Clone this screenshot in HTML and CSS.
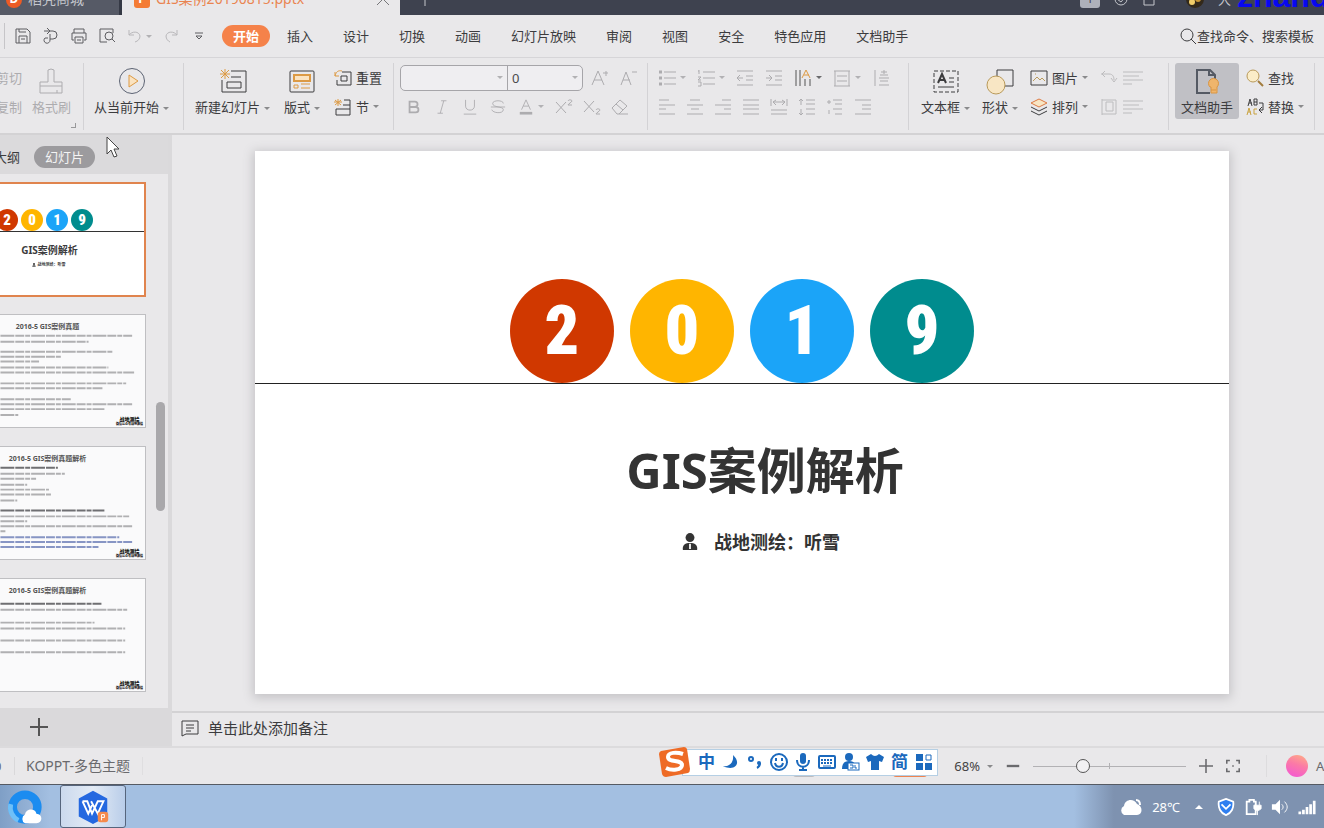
FILE: index.html
```html
<!DOCTYPE html>
<html lang="zh-CN">
<head>
<meta charset="utf-8">
<title>GIS案例20190815.pptx</title>
<link rel="stylesheet" href="styles.css">
</head>
<body>
<svg class="sprite" aria-hidden="true">
  <symbol id="i-save" viewBox="0 0 18 18"><path d="M2 2h11l3 3v11H2zM5 16V9h8v7M5 2v3h7M7 12h4"/></symbol>
  <symbol id="i-export" viewBox="0 0 18 18"><path d="M2 4h9a4 4 0 0 1 0 8H8M5 1l3 3-3 3M8 7v6a3 3 0 1 1-5-2h3"/></symbol>
  <symbol id="i-print" viewBox="0 0 18 18"><path d="M4 6V2h10v4M4 13H2V6h14v7h-2M5 10h8v6H5zM7 13h4"/></symbol>
  <symbol id="i-preview" viewBox="0 0 18 18"><path d="M9 15H2V2h13v4"/><circle cx="11" cy="9" r="4"/><path d="M14 12l3 3"/></symbol>
  <symbol id="i-undo" viewBox="0 0 18 18"><path d="M3 3v5h5M3 8c3-4 10-4 11 1 0 3-2 5-5 6"/></symbol>
  <symbol id="i-redo" viewBox="0 0 18 18"><path d="M15 3v5h-5M15 8C12 4 5 4 4 9c0 3 2 5 4 6"/></symbol>
  <symbol id="i-more" viewBox="0 0 18 18"><path d="M5 6h8M6 9l3 3 3-3z"/></symbol>
  <symbol id="i-search" viewBox="0 0 18 18"><circle cx="8" cy="8" r="6"/><path d="M12 12l5 5"/></symbol>
  <symbol id="i-brush" viewBox="0 0 28 28"><path d="M3 26V15h8V3q3-2 6 0v12h8v11zM3 19h22M20 26v-3"/></symbol>
  <symbol id="i-play" viewBox="0 0 28 28"><circle cx="14" cy="14" r="12.5" stroke="#5c6373"/><path d="M11 8l9 6-9 6z" fill="#fbe3c0" stroke="#dc9a44"/></symbol>
  <symbol id="i-newslide" viewBox="0 0 28 28"><path d="M12 4h15v21H3V13M12 10h10M8 15h14v6H8z"/><path d="M6 2v10M1 7h10M2 3l8 8M10 3l-8 8" stroke="#dc9a44"/></symbol>
  <symbol id="i-layout" viewBox="0 0 28 28"><rect x="2" y="4" width="24" height="21" rx="1"/><path d="M6 8h16v6H6z" fill="#fbe3c0" stroke="#dc9a44" stroke-width="2"/><path d="M6 18h4v3H6zM13 17h9M13 21h9" stroke="#dc9a44"/></symbol>
  <symbol id="i-reset" viewBox="0 0 18 18"><path d="M8 3h9v13H3v-5M7 7h6v5H7z"/><path d="M1 7c1-4 3-6 7-5M1 3v4h4" stroke="#dc9a44"/></symbol>
  <symbol id="i-section" viewBox="0 0 18 18"><path d="M10 2h6v5H9M2 11h14v6H2zM16 7v4"/><path d="M4 1v7M0 4h8M1 2l6 5M7 2L1 7" stroke="#dc9a44"/></symbol>
  <symbol id="i-aup" viewBox="0 0 18 18"><path d="M1 16L7 2l6 14M3 11h8M12 4h5M15 2v5"/></symbol>
  <symbol id="i-adown" viewBox="0 0 18 18"><path d="M2 16L7 3l5 13M4 11h7M13 3h5"/></symbol>
  <symbol id="i-bold" viewBox="0 0 18 18"><path d="M4 3h6a3 3 0 0 1 0 6H4zM4 9h7a3 3 0 0 1 0 6H4z" stroke-width="2"/></symbol>
  <symbol id="i-italic" viewBox="0 0 18 18"><path d="M8 2h6M4 16h6M11 2L7 16"/></symbol>
  <symbol id="i-under" viewBox="0 0 18 18"><path d="M4 1v7c0 6 10 6 10 0V1M2 17h14"/></symbol>
  <symbol id="i-strike" viewBox="0 0 18 18"><path d="M15 5c0-4-12-4-12 0 0 5 12 3 12 7 0 5-12 4-13 0M1 9h16"/></symbol>
  <symbol id="i-color" viewBox="0 0 18 18"><path d="M4 12L9 1l5 11M6 8h6"/><path d="M2 16h14" stroke-width="3"/></symbol>
  <symbol id="i-sup" viewBox="0 0 18 18"><path d="M1 4l10 11M11 4L1 15M13 3c1-2 4-1 4 0s-4 3-4 4h4"/></symbol>
  <symbol id="i-sub" viewBox="0 0 18 18"><path d="M1 3l10 11M11 3L1 14M13 12c1-2 4-1 4 0s-4 3-4 4h4"/></symbol>
  <symbol id="i-erase" viewBox="0 0 18 18"><path d="M1 10l8-8 7 6-8 8H6zM5 6l7 6M8 16h9"/></symbol>
  <symbol id="i-bullets" viewBox="0 0 18 18"><path d="M6 3h12M6 9h12M6 15h12"/><path d="M1 3h3M1 9h3M1 15h3" stroke-width="3"/></symbol>
  <symbol id="i-numbers" viewBox="0 0 18 18"><path d="M6 3h12M6 9h12M6 15h12M2 1v4M1 2h1M1 8h3l-3 3h3M1 13h3v4H1"/></symbol>
  <symbol id="i-outdent" viewBox="0 0 18 18"><path d="M1 2h16M10 7h7M10 11h7M1 16h16M1 9h6M4 6L1 9l3 3"/></symbol>
  <symbol id="i-indent" viewBox="0 0 18 18"><path d="M1 2h16M10 7h7M10 11h7M1 16h16M1 9h6M4 6l3 3-3 3"/></symbol>
  <symbol id="i-dir" viewBox="0 0 18 18"><path d="M2 1v16M6 1v16M11 10v7M16 10v7" stroke="#555"/><path d="M8 9l4-8 4 8M10 6h5" stroke="#dc9a44"/></symbol>
  <symbol id="i-valign" viewBox="0 0 18 18"><path d="M1 2h16M1 17h16M2 2v15M16 2v15M4 7h10M4 12h10"/></symbol>
  <symbol id="i-columns" viewBox="0 0 18 18"><path d="M3 1v16M8 6h8M7 9h10M8 12h8M7 16h10M12 1v4M9 3h6"/></symbol>
  <symbol id="i-left" viewBox="0 0 18 18"><path d="M1 2h10M1 7h16M1 11h7M1 16h16"/></symbol>
  <symbol id="i-center" viewBox="0 0 18 18"><path d="M4 2h10M1 7h16M5 11h8M1 16h16"/></symbol>
  <symbol id="i-right" viewBox="0 0 18 18"><path d="M8 2h9M1 7h16M10 11h7M1 16h16"/></symbol>
  <symbol id="i-justify" viewBox="0 0 18 18"><path d="M1 2h16M1 7h16M1 11h16M1 16h16"/></symbol>
  <symbol id="i-spread" viewBox="0 0 18 18"><path d="M1 1v7M17 1v7M3 4h12M6 2L3 4l3 3M12 2l3 2-3 3M1 12h16M1 16h16"/></symbol>
  <symbol id="i-line" viewBox="0 0 18 18"><path d="M8 2h9M8 6h9M8 11h9M8 16h9M3 1v6M1 3l2-2 2 2M3 11v6M1 15l2 2 2-2"/></symbol>
  <symbol id="i-para" viewBox="0 0 18 18"><path d="M7 2h9M9 6h7M7 11h9M9 16h7M3 2v4M1 4h4M3 12v4"/></symbol>
  <symbol id="i-level" viewBox="0 0 18 18"><path d="M1 2h16M8 7h9M8 11h9M1 16h16"/></symbol>
  <symbol id="i-textbox" viewBox="0 0 28 28"><path d="M2 4h24v21H2z" stroke-dasharray="4 2"/><path d="M6 16l4-9 4 9M8 13h5" stroke-width="2"/><path d="M17 11h5M17 15h5M6 20h16"/></symbol>
  <symbol id="i-shape" viewBox="0 0 28 28"><path d="M11 3h16v16H11z"/><circle cx="10" cy="18" r="9" fill="#f8e6c4" stroke="#b99a5a"/></symbol>
  <symbol id="i-picture" viewBox="0 0 18 18"><path d="M1 2h16v14H1z"/><path d="M3 12l4-4 3 3 2-2 3 3M5 5h1" stroke="#b99a5a"/></symbol>
  <symbol id="i-layers" viewBox="0 0 18 18"><path d="M1 9l8 4 8-4M1 13l8 4 8-4"/><path d="M9 1l8 4-8 4-8-4z" fill="#f8e6c4" stroke="#dc7a44"/></symbol>
  <symbol id="i-rotate" viewBox="0 0 18 18"><path d="M1 5h8c4 0 5 3 5 6M5 2L2 5l3 3M11 9l3 4 3-4"/></symbol>
  <symbol id="i-size" viewBox="0 0 18 18"><path d="M2 1v16M2 2h14v14H2M6 4h7v9H6z"/></symbol>
  <symbol id="i-lines" viewBox="0 0 24 18"><path d="M1 3h20M1 7h16M1 11h20M1 15h9"/></symbol>
  <symbol id="i-assist" viewBox="0 0 28 28"><path d="M22 12V8l-5-5H4v23h13M16 3v5h6" stroke="#555a64" stroke-width="2"/><path d="M17 20a5 5 0 1 1 7 0v6h-6v-6zM18 23h5" fill="#efb56c" stroke="#d99542"/></symbol>
  <symbol id="i-find" viewBox="0 0 18 18"><circle cx="7" cy="7" r="6" fill="#fbedc8" stroke="#b99a5a"/><path d="M12 12l5 5" stroke="#a27c3e" stroke-width="2"/></symbol>
  <symbol id="i-replace" viewBox="0 0 18 18"><path d="M2 8l2-7 2 7M3 5h3M8 1v6h3V1zM8 4h3M13 5h4v7h-3M16 9l-3 3 3 3"/><path d="M1 17l2-7 2 7M2 14h3M11 11H8v5h3" stroke="#c9a23e"/></symbol>
  <symbol id="i-notes" viewBox="0 0 18 18"><path d="M1 2h16v13H5l-4 2zM5 6h8M5 9h8M5 12h5"/></symbol>
  <symbol id="i-plus" viewBox="0 0 18 18"><path d="M9 0v18M0 9h18" stroke-width="2"/></symbol>
  <symbol id="i-minus" viewBox="0 0 18 18"><path d="M1 9h16" stroke-width="3"/></symbol>
  <symbol id="i-fit" viewBox="0 0 18 18"><path d="M1 6V2h4M13 2h4v4M17 12v4h-4M5 16H1v-4M8 9h2M9 8v2" stroke-width="2"/></symbol>
  <symbol id="i-person" viewBox="0 0 18 20"><circle cx="9" cy="5" r="5" fill="#333" stroke="none"/><path d="M1 19c-1-6 3-8 8-8s9 2 8 8z" fill="#333" stroke="none"/><path d="M9 12v6" stroke="#fff" stroke-width="2"/></symbol>
</svg>

<header class="titlebar">
  <div class="tab tab-docer"><span class="logo logo-red">D</span>稻壳商城</div>
  <div class="tab tab-file"><span class="logo logo-orange">P</span><span class="tab-name">GIS案例20190815.pptx</span>
    <button class="tab-close" aria-label="关闭"><svg class="ico s14" viewBox="0 0 14 14"><path d="M1 1l12 12M13 1L1 13"/></svg></button></div>
  <button class="tab-new" aria-label="新建"><svg class="ico s14" viewBox="0 0 14 14"><path d="M7 0v14M0 7h14"/></svg></button>
  <div class="title-tools">
    <span class="badge">1</span>
    <svg class="ico s14" viewBox="0 0 14 14"><circle cx="7" cy="7" r="6"/><path d="M3 7l4 3 5-6"/></svg>
    <svg class="ico s14" viewBox="0 0 14 14"><path d="M2 1h10v12H2z"/></svg>
    <svg class="avatar" viewBox="0 0 18 18"><circle cx="9" cy="9" r="9" fill="#33291a"/><circle cx="6" cy="12" r="3" fill="#f0cd6a"/><circle cx="12" cy="9" r="3" fill="#c89634"/></svg>
    <span class="user">大<b>zhand</b></span>
  </div>
</header>

<nav class="menubar">
  <div class="quick">
    <button aria-label="保存"><svg class="ico s18"><use href="#i-save"/></svg></button>
    <button aria-label="输出"><svg class="ico s18"><use href="#i-export"/></svg></button>
    <button aria-label="打印"><svg class="ico s18"><use href="#i-print"/></svg></button>
    <button aria-label="打印预览"><svg class="ico s18"><use href="#i-preview"/></svg></button>
    <button class="off" aria-label="撤销"><svg class="ico s18"><use href="#i-undo"/></svg><i class="caret"></i></button>
    <button class="off" aria-label="恢复"><svg class="ico s18"><use href="#i-redo"/></svg></button>
    <button aria-label="更多"><svg class="ico s18"><use href="#i-more"/></svg></button>
  </div>
  <div class="menus">
    <button class="active">开始</button><button>插入</button><button>设计</button><button>切换</button><button>动画</button><button>幻灯片放映</button><button>审阅</button><button>视图</button><button>安全</button><button>特色应用</button><button>文档助手</button>
  </div>
  <button class="search"><svg class="ico s18"><use href="#i-search"/></svg>查找命令、搜索模板</button>
</nav>

<section class="ribbon">
  <div class="group g-clip off">
    <div class="stack"><button class="small">剪切</button><button class="small">复制</button></div>
    <button class="large"><svg class="ico s28"><use href="#i-brush"/></svg><span>格式刷</span></button>
    <i class="corner"></i>
  </div>
  <div class="group g-play">
    <button class="large"><svg class="ico s28"><use href="#i-play"/></svg><span>从当前开始<i class="caret"></i></span></button>
  </div>
  <div class="group g-slide">
    <button class="large"><svg class="ico s28"><use href="#i-newslide"/></svg><span>新建幻灯片<i class="caret"></i></span></button>
    <button class="large"><svg class="ico s28"><use href="#i-layout"/></svg><span>版式<i class="caret"></i></span></button>
    <div class="stack"><button class="small"><svg class="ico s18"><use href="#i-reset"/></svg>重置</button><button class="small"><svg class="ico s18"><use href="#i-section"/></svg>节<i class="caret"></i></button></div>
  </div>
  <div class="group g-font off">
    <div class="stack">
      <div class="line">
        <div class="combo"><select class="font-name" aria-label="字体"><option></option></select><i class="caret"></i><select class="font-size" aria-label="字号"><option>0</option></select><i class="caret"></i></div>
        <button class="cell" aria-label="增大字号"><svg class="ico s18"><use href="#i-aup"/></svg></button>
        <button class="cell" aria-label="减小字号"><svg class="ico s18"><use href="#i-adown"/></svg></button>
      </div>
      <div class="line">
        <button class="cell" aria-label="加粗"><svg class="ico s16"><use href="#i-bold"/></svg></button>
        <button class="cell" aria-label="倾斜"><svg class="ico s16"><use href="#i-italic"/></svg></button>
        <button class="cell" aria-label="下划线"><svg class="ico s16"><use href="#i-under"/></svg></button>
        <button class="cell" aria-label="删除线"><svg class="ico s16"><use href="#i-strike"/></svg></button>
        <button class="cell drop" aria-label="字体颜色"><svg class="ico s16"><use href="#i-color"/></svg><i class="caret"></i></button>
        <button class="cell" aria-label="上标"><svg class="ico s18"><use href="#i-sup"/></svg></button>
        <button class="cell" aria-label="下标"><svg class="ico s18"><use href="#i-sub"/></svg></button>
        <button class="cell" aria-label="清除格式"><svg class="ico s18"><use href="#i-erase"/></svg></button>
      </div>
    </div>
  </div>
  <div class="group g-para off">
    <div class="stack">
      <div class="line spaced">
        <button class="cell drop" aria-label="项目符号"><svg class="ico s18"><use href="#i-bullets"/></svg><i class="caret"></i></button>
        <button class="cell drop" aria-label="编号"><svg class="ico s18"><use href="#i-numbers"/></svg><i class="caret"></i></button>
        <button class="cell" aria-label="减少缩进"><svg class="ico s18"><use href="#i-outdent"/></svg></button>
        <button class="cell" aria-label="增加缩进"><svg class="ico s18"><use href="#i-indent"/></svg></button>
        <button class="cell drop" aria-label="文字方向"><svg class="ico s18"><use href="#i-dir"/></svg><i class="caret dark"></i></button>
        <button class="cell drop" aria-label="对齐文本"><svg class="ico s18"><use href="#i-valign"/></svg><i class="caret"></i></button>
        <button class="cell" aria-label="分栏"><svg class="ico s18"><use href="#i-columns"/></svg></button>
      </div>
      <div class="line">
        <button class="cell" aria-label="左对齐"><svg class="ico s18"><use href="#i-left"/></svg></button>
        <button class="cell" aria-label="居中"><svg class="ico s18"><use href="#i-center"/></svg></button>
        <button class="cell" aria-label="右对齐"><svg class="ico s18"><use href="#i-right"/></svg></button>
        <button class="cell" aria-label="两端对齐"><svg class="ico s18"><use href="#i-justify"/></svg></button>
        <button class="cell" aria-label="分散对齐"><svg class="ico s18"><use href="#i-spread"/></svg></button>
        <button class="cell" aria-label="行距"><svg class="ico s18"><use href="#i-line"/></svg></button>
        <button class="cell" aria-label="段距"><svg class="ico s18"><use href="#i-para"/></svg></button>
        <button class="cell" aria-label="级别"><svg class="ico s18"><use href="#i-level"/></svg></button>
      </div>
    </div>
  </div>
  <div class="group g-insert">
    <button class="large"><svg class="ico s28"><use href="#i-textbox"/></svg><span>文本框<i class="caret"></i></span></button>
    <button class="large"><svg class="ico s28"><use href="#i-shape"/></svg><span>形状<i class="caret"></i></span></button>
    <div class="stack"><button class="small"><svg class="ico s18"><use href="#i-picture"/></svg>图片<i class="caret"></i></button><button class="small"><svg class="ico s18"><use href="#i-layers"/></svg>排列<i class="caret"></i></button></div>
    <div class="stack faint"><button class="small" aria-label="旋转"><svg class="ico s18"><use href="#i-rotate"/></svg><svg class="ico lines"><use href="#i-lines"/></svg></button><button class="small" aria-label="大小"><svg class="ico s18"><use href="#i-size"/></svg><svg class="ico lines"><use href="#i-lines"/></svg></button></div>
  </div>
  <div class="group g-tools">
    <button class="large pressed"><svg class="ico s28"><use href="#i-assist"/></svg><span>文档助手</span></button>
    <div class="stack"><button class="small"><svg class="ico s18"><use href="#i-find"/></svg>查找</button><button class="small"><svg class="ico s18"><use href="#i-replace"/></svg>替换<i class="caret"></i></button></div>
  </div>
</section>

<main class="work">
  <aside class="panel">
    <div class="panel-tabs"><button>大纲</button><button class="active">幻灯片</button></div>
    <div class="panel-list">
      <div class="thumbs">
        <div class="thumb selected">
          <div class="mini-dots"><span class="red">2</span><span class="yellow">0</span><span class="blue">1</span><span class="teal">9</span></div>
          <p class="mini-title">GIS案例解析</p>
          <p class="mini-sub"><svg class="ico s4"><use href="#i-person"/></svg>战地测绘：听雪</p>
        </div>
        <div class="thumb">
          <p class="thumb-title">2016-5 GIS案例真题</p>
          <svg class="body-lines" viewBox="0 0 203 113" aria-hidden="true"><path d="M10 21H190M10 27H146M10 37H170M10 42H119M10 47H96M10 53H166M10 58H192M10 69H184M10 74H160M10 85H128M10 90H190M10 95H162M10 101H75"/></svg>
          <p class="mark">战地测绘<small>微信公众号战地测绘</small></p>
        </div>
        <div class="thumb">
          <p class="thumb-title">2016-5 GIS案例真题解析</p>
          <svg class="body-lines" viewBox="0 0 203 113" aria-hidden="true"><path class="strong" d="M10 21H115M10 64H162"/><path d="M10 27H122M10 32H93M10 38H84M10 43H106M10 48H108M10 54H74M10 70H187M10 75H84M10 80H190M10 85H62"/><path class="link" d="M10 91H177M10 96H190M10 101H156"/></svg>
          <p class="mark">战地测绘<small>微信公众号战地测绘</small></p>
        </div>
        <div class="thumb">
          <p class="thumb-title">2016-5 GIS案例真题解析</p>
          <svg class="body-lines" viewBox="0 0 203 113" aria-hidden="true"><path class="strong" d="M10 25H159"/><path d="M10 31H185M10 44H152M10 50H183M10 62H183M10 74H183"/></svg>
          <p class="mark">战地测绘<small>微信公众号战地测绘</small></p>
        </div>
      </div>
      <div class="scroll"><div class="scroll-thumb"></div></div>
    </div>
    <button class="panel-add" aria-label="新建幻灯片"><svg class="ico s18"><use href="#i-plus"/></svg></button>
  </aside>
  <div class="editor">
    <div class="stage">
      <article class="slide">
        <div class="dots"><span class="red">2</span><span class="yellow">0</span><span class="blue">1</span><span class="teal">9</span></div>
        <h1>GIS案例解析</h1>
        <p class="author"><svg class="ico person"><use href="#i-person"/></svg><span>战地测绘<span class="colon">：</span>听雪</span></p>
      </article>
    </div>
    <div class="notes"><svg class="ico s18"><use href="#i-notes"/></svg>单击此处添加备注</div>
  </div>
</main>

<footer class="status">
  <span class="page-no">0</span>
  <span class="theme">KOPPT-多色主题</span>
  <div class="views"><span class="view"></span><span class="view on"></span></div>
  <div class="zoom">
    <button class="percent">68%<i class="caret"></i></button>
    <button aria-label="缩小"><svg class="ico s14"><use href="#i-minus"/></svg></button>
    <input type="range" min="0" max="100" value="31" aria-label="缩放">
    <button aria-label="放大"><svg class="ico s14"><use href="#i-plus"/></svg></button>
    <button aria-label="适应窗口"><svg class="ico s14"><use href="#i-fit"/></svg></button>
  </div>
  <div class="assistant"><span class="orb"></span>A</div>
</footer>

<footer class="taskbar">
  <button class="task" aria-label="浏览器"><svg class="s40" viewBox="0 0 40 40"><circle cx="20" cy="20" r="13" fill="none" stroke="#1b8cf0" stroke-width="9"/><path d="M5 17a15 15 0 0 0 8 17" fill="none" stroke="#6fc0f8" stroke-width="5"/><path d="M20 37a5 5 0 0 1 0-9c1-7 11-7 12-1 7 0 7 10 0 10z" fill="#fff"/></svg></button>
  <button class="task current" aria-label="WPS"><svg class="s40" viewBox="0 0 40 40"><path d="M20 3l15 8v19l-15 8-15-8V11z" fill="#2468e0"/><path d="M9 14h5l5 13 6-13h6l-6 13-7-13M9 14l6 13 4-9" fill="none" stroke="#fff" stroke-width="2"/><rect x="25" y="25" width="11" height="11" rx="3" fill="#f58a4b"/><path d="M29 34v-6h3v3h-3" fill="none" stroke="#fff"/></svg></button>
  <div class="tray">
    <svg class="s24" viewBox="0 0 24 24"><path d="M5 20a5 5 0 0 1 0-9c1-7 10-8 13-2 6 2 6 11 0 11z" fill="#fff"/><path d="M17 5c3 0 4 2 4 5" fill="none" stroke="#fff" stroke-width="2"/></svg>
    <span class="temp">28℃</span>
    <i class="up"></i>
    <svg class="s20" viewBox="0 0 20 20"><path d="M10 1l8 3c1 7-2 13-8 15C4 17 1 11 2 4z" fill="#2f7ff0" stroke="#fff" stroke-width="2"/><path d="M5 7l5 5 5-5" fill="none" stroke="#fff" stroke-width="2"/></svg>
    <svg class="s20" viewBox="0 0 20 20"><path d="M3 4h3V2h5v2h2v14H3z" fill="none" stroke="#fff" stroke-width="2"/><path d="M11 8h8v4l-3 2h-2l-3-2zM13 4v4M17 4v4M15 14v5" fill="#fff" stroke="#fff"/></svg>
    <svg class="s20" viewBox="0 0 20 20"><path d="M1 7h4l5-5v16l-5-5H1z" fill="#fff"/><path d="M12 7c2 2 2 4 0 6M15 4c4 4 4 8 0 12" fill="none" stroke="#fff" stroke-width="1"/></svg>
    <svg class="s20" viewBox="0 0 20 20"><path d="M2 18v-3M6 18v-5M10 18v-8M14 18V7M18 18V3" stroke="#fff" stroke-width="3"/></svg>
  </div>
</footer>

<div class="ime">
  <svg class="sogou" viewBox="0 0 32 32"><path d="M3 5L26 1q2 0 3 2l3 20q0 3-2 4L8 31q-3 0-4-3L1 8q0-2 2-3z" fill="#ee6b26"/><path d="M25 8c-6-2-15-2-15 3 0 6 14 2 14 8 0 5-10 6-16 3" fill="none" stroke="#fff" stroke-width="4"/></svg>
  <div class="ime-bar">
    <b>中</b>
    <svg viewBox="0 0 18 18"><path d="M11 2c9 8 2 17-10 11C7 14 12 10 11 2z" fill="#1b69bd"/></svg>
    <svg viewBox="0 0 18 18"><circle cx="5" cy="6" r="2" fill="none" stroke="#1b69bd" stroke-width="2"/><circle cx="13" cy="10" r="2" fill="#1b69bd"/><path d="M14 10c0 3-1 4-3 5" stroke="#1b69bd" stroke-width="2"/></svg>
    <svg viewBox="0 0 18 18"><g fill="none" stroke="#1b69bd" stroke-width="2"><circle cx="9" cy="9" r="8"/><path d="M5 10c1 5 7 5 8 0M6 5v3M12 5v3"/></g></svg>
    <svg viewBox="0 0 18 18"><rect x="6" y="0" width="6" height="11" rx="3" fill="#1b69bd"/><path d="M3 7c0 9 12 9 12 0M9 13v4M5 17h8" fill="none" stroke="#1b69bd" stroke-width="2"/></svg>
    <svg viewBox="0 0 18 18"><rect x="1" y="3" width="16" height="12" rx="1" fill="none" stroke="#1b69bd" stroke-width="2"/><path d="M3 7h12M3 10h12" stroke="#1b69bd" stroke-width="2" stroke-dasharray="2 1"/><path d="M5 13h8" stroke="#1b69bd"/></svg>
    <svg viewBox="0 0 18 18"><circle cx="7" cy="4" r="4" fill="#1b69bd"/><path d="M0 16c0-6 3-8 7-8 3 0 5 1 6 3v5z" fill="#1b69bd"/><rect x="6" y="10" width="11" height="7" fill="#fff" stroke="#1b69bd"/><path d="M8 12h3v3H8M13 12v3h2" fill="none" stroke="#1b69bd"/></svg>
    <svg viewBox="0 0 18 18"><path d="M5 1q4 4 8 0l5 3-2 5-3-1v9H5V8L2 9 0 4z" fill="#1b69bd"/></svg>
    <b>简</b>
    <svg viewBox="0 0 18 18"><path d="M1 1h7v7H1zM1 10h7v7H1zM10 10h7v7h-7z" fill="#1b69bd"/><path d="M11 2h5v5h-5z" fill="none" stroke="#1b69bd"/></svg>
  </div>
</div>

<svg class="cursor" viewBox="0 0 14 22" aria-hidden="true"><path d="M1 1v17l4-4 3 7 3-1-3-7h5z" fill="#fff" stroke="#444"/></svg>
</body>
</html>
```
FILE: styles.css
```css
* { box-sizing: border-box; }
body {
  margin: 0;
  min-height: 100vh;
  display: flex;
  flex-direction: column;
  overflow: hidden;
  background: #e9e8ea;
  color: #3c3c3e;
  font: 13px/18px "Noto Sans", "Noto Sans CJK SC", sans-serif;
}
button, select, input { font: inherit; color: inherit; }
button { border: 0; padding: 0; margin: 0; background: none; }
p, h1 { margin: 0; }
.sprite { position: absolute; width: 0; height: 0; }
.ico { fill: none; stroke: currentColor; stroke-width: 1; flex: none; display: block; }
.s4 { width: 4px; height: 4px; }
.s14 { width: 14px; height: 14px; }
.s16 { width: 16px; height: 16px; }
.s18 { width: 18px; height: 18px; }
.s20 { width: 18px; height: 18px; }
.s24 { width: 24px; height: 24px; }
.s28 { width: 28px; height: 28px; }
.s40 { width: 38px; height: 38px; display: block; }
.caret {
  display: inline-block;
  flex: none;
  border: 3px solid transparent;
  border-top-color: #8a8a8c;
  border-bottom: 0;
}
.off { color: #adacaf; }
.off .caret { border-top-color: #b2b1b4; }
.off .caret.dark { border-top-color: #6a6a6c; }

/* Title bar */
.titlebar {
  flex: none;
  height: 15px;
  display: flex;
  align-items: flex-end;
  overflow: hidden;
  background: #3e424f;
  color: #c4c6cc;
}
.tab { flex: none; height: 32px; display: flex; align-items: center; font-size: 14px; }
.tab-docer { width: 122px; padding-left: 6px; gap: 6px; background: #565a66; border-right: 3px solid #353945; }
.tab-file { width: 278px; padding: 0 10px 0 12px; gap: 6px; background: #e9e8ea; color: #e98450; }
.tab-name { flex: 1; }
.tab-close { color: #77777a; }
.tab-new { flex: none; height: 32px; padding: 0 18px; color: #c4c6cc; }
.logo { width: 16px; height: 18px; border-radius: 3px; color: #fff; text-align: center; font-weight: bold; font-size: 12px; }
.logo-red { background: #ec5b25; border-radius: 8px; }
.logo-orange { background: #f47c35; }
.title-tools { margin-left: auto; height: 32px; display: flex; align-items: center; gap: 14px; white-space: nowrap; }
.badge { width: 20px; height: 18px; border-radius: 3px; background: #aeb1ba; color: #3e424f; text-align: center; font-size: 11px; }
.avatar { width: 18px; height: 18px; margin-left: 16px; }
.user { width: 106px; overflow: hidden; display: flex; align-items: center; gap: 6px; line-height: 32px; }
.user b { padding-bottom: 6px; color: #0808f0; font: bold 32px/32px "Liberation Sans", sans-serif; }

/* Menu bar */
.menubar { flex: none; height: 43px; display: flex; align-items: center; border-bottom: 1px solid #d6d5d8; padding: 0 10px 0 4px; white-space: nowrap; }
.quick { display: flex; align-items: center; gap: 10px; padding-left: 9px; border-left: 1px solid #c6c5c8; height: 26px; color: #5c5c60; }
.quick button { display: flex; align-items: center; gap: 2px; }
.quick .off { color: #b8b7ba; }
.menus { display: flex; align-items: center; gap: 30px; padding-left: 14px; }
.menus .active { padding: 2px 11px; margin-right: -13px; border-radius: 12px; background: #f5824a; color: #fff; font-weight: bold; }
.search { margin-left: auto; display: flex; align-items: center; }

/* Ribbon */
.ribbon { flex: none; height: 77px; padding: 5px 0 3px; display: flex; border-bottom: 2px solid #d3d2d4; white-space: nowrap; }
.group { flex: none; display: flex; align-items: flex-start; border-right: 1px solid #d3d2d5; }
.large { display: flex; flex-direction: column; align-items: center; gap: 3px; padding: 4px 0 2px; }
.large .caret, .small .caret { margin-left: 4px; vertical-align: middle; }
.stack { display: flex; flex-direction: column; }
.small { display: flex; align-items: center; gap: 4px; height: 29px; }
.small .caret { margin-left: 0; }
.line { display: flex; align-items: center; height: 29px; }
.line.spaced { gap: 1px; }
.cell { width: 28px; height: 28px; flex: none; display: flex; align-items: center; justify-content: center; }
.drop { width: 38px; gap: 4px; }
.g-clip { width: 84px; justify-content: flex-end; gap: 10px; padding-right: 12px; position: relative; }
.g-clip .small { justify-content: flex-end; }
.corner { position: absolute; right: 7px; bottom: 2px; width: 5px; height: 5px; border: solid #98989a; border-width: 0 1px 1px 0; }
.g-play { padding: 0 14px 0 10px; }
.g-slide { padding: 0 11px 0 11px; gap: 14px; }
.g-font { padding: 0 5px 0 6px; }
.g-para { padding: 0 13px 0 5px; }
.g-insert { padding: 0 22px 0 12px; gap: 12px; }
.g-tools { padding: 0 10px 0 6px; gap: 7px; }
.combo { width: 183px; height: 26px; margin-right: 3px; display: flex; align-items: center; border: 1px solid #a6a5a9; border-radius: 5px; background: #efeef1; padding-right: 4px; }
.combo select { height: 100%; border: 0; padding: 0 0 0 4px; background: none; appearance: none; color: #4a4a4c; outline: 0; min-width: 0; }
.font-name { width: 96px; }
.combo .font-size { flex: 1; margin-left: 4px; border-left: 1px solid #a6a5a9; }
.faint { opacity: .25; }
.lines { width: 24px; height: 18px; }
.pressed { width: 64px; height: 56px; background: #c0c0c5; border-radius: 3px; }

/* Work area */
.work { flex: 1; display: flex; min-height: 0; }
.panel { flex: none; width: 172px; display: flex; flex-direction: column; border-right: 4px solid #dad9db; }
.panel-tabs { flex: none; height: 39px; display: flex; align-items: center; justify-content: flex-end; gap: 14px; padding: 4px 73px 0 0; background: #dbdadc; }
.panel-tabs button { flex: none; }
.panel-tabs .active { background: #9c9b9e; color: #f4f4f4; border-radius: 11px; padding: 2px 11px; }
.panel-list { flex: 1; display: flex; overflow: hidden; min-height: 0; }
.thumbs { flex: 1; min-width: 0; display: flex; flex-direction: column; align-items: flex-end; gap: 18px; padding-top: 8px; }
.thumb { position: relative; flex: none; width: 203px; height: 114px; background: #fafafb; border: 1px solid #bfbfc2; }
.selected { background: #fff; border: 2px solid #e0844e; height: 115px; margin-bottom: -1px; }
.mini-dots { display: flex; justify-content: center; gap: 3px; padding-top: 25px; border-bottom: 1px solid #333; }
.mini-dots span, .dots span { border-radius: 50%; color: #fff; text-align: center; font-family: "Roboto Condensed", Roboto, sans-serif; font-weight: 900; }
.mini-dots span { width: 22px; height: 22px; font-size: 15px; line-height: 22px; }
.red { background: #d03800; }
.yellow { background: #ffb500; }
.blue { background: #1ba4f8; }
.teal { background: #008c8e; }
.mini-title { padding: 10px 0 0 10px; text-align: center; font-weight: bold; font-size: 10px; line-height: 16px; }
.mini-sub { display: flex; justify-content: center; align-items: center; gap: 2px; padding-left: 8px; font-size: 4px; line-height: 14px; font-weight: bold; }
.thumb-title { padding: 5px 0 0 6px; text-align: center; font-weight: bold; font-size: 7px; line-height: 14px; color: #555; }
.body-lines { position: absolute; inset: 0; width: 100%; height: 100%; fill: none; stroke: #b0b0b2; stroke-width: 2; stroke-dasharray: 9 1 5 1 14 1; }
.body-lines .strong { stroke: #6f6f72; }
.body-lines .link { stroke: #8795c4; }
.mark { position: absolute; right: 2px; bottom: 1px; text-align: center; font-weight: 900; font-size: 5px; line-height: 6px; color: #111; }
.mark small { display: block; font-size: 3px; line-height: 4px; }
.scroll { flex: none; width: 22px; padding: 228px 3px 0 10px; }
.scroll-thumb { height: 109px; border-radius: 5px; background: #a9a8ab; }
.panel-add { flex: none; height: 38px; padding-left: 30px; background: #dad9db; color: #555; }
.editor { flex: 1; display: flex; flex-direction: column; min-width: 0; }
.stage { flex: 1; padding: 16px 95px 17px 83px; display: flex; flex-direction: column; }
.slide { flex: 1; background: #fff; box-shadow: 0 2px 10px 2px #c4c3c6; }
.dots { display: flex; justify-content: center; gap: 16px; padding-top: 128px; border-bottom: 1px solid #222; }
.dots span { width: 104px; height: 104px; font-size: 68px; line-height: 104px; }
.slide h1 { padding: 51px 0 0 46px; text-align: center; font-size: 49px; line-height: 70px; color: #333; }
.author { display: flex; align-items: center; justify-content: center; gap: 16px; padding: 22px 0 0 38px; font-size: 18px; line-height: 28px; font-weight: bold; color: #333; }
.colon { font-family: "Noto Sans CJK TC", sans-serif; }
.person { width: 16px; height: 18px; }
.notes { flex: none; height: 35px; display: flex; align-items: center; gap: 9px; padding: 0 0 4px 9px; border-top: 2px solid #d3d2d4; font-size: 15px; }

/* Status bar */
.status { flex: none; height: 39px; display: flex; align-items: center; border-top: 2px solid #dcdbdd; border-bottom: 1px solid #555a63; color: #6a6a6d; white-space: nowrap; }
.page-no { width: 15px; border-right: 1px solid #d9d8da; text-indent: -6px; }
.theme { padding: 0 12px 0 11px; border-right: 1px solid #dfdee0; font-size: 14px; }
.views { flex: 1; align-self: flex-end; display: flex; justify-content: flex-end; gap: 78px; padding: 0 27px 7px 0; }
.view { width: 22px; height: 12px; border-radius: 3px; background: #bdbcbf; }
.view.on { width: 34px; background: #ef8450; }
.zoom { display: flex; align-items: center; gap: 13px; padding-right: 26px; }
.zoom button { display: flex; align-items: center; }
.percent { gap: 7px; color: #444; }
.zoom input { appearance: none; width: 153px; height: 16px; margin: 0; background: linear-gradient(#b2b1b4, #b2b1b4) 0 50% / 100% 1px no-repeat, linear-gradient(#b2b1b4, #b2b1b4) 50% 50% / 1px 6px no-repeat; }
.zoom input::-webkit-slider-thumb { appearance: none; width: 14px; height: 14px; border: 1px solid #555; border-radius: 50%; background: #f2f1f3; }
.assistant { display: flex; align-items: center; gap: 8px; padding-left: 19px; width: 58px; overflow: hidden; border-left: 1px solid #dddcde; }
.orb { flex: none; width: 22px; height: 22px; border-radius: 50%; background: linear-gradient(200deg, #ffb084, #fb7aa6 45%, #f354d8); }

/* Task bar */
.taskbar { flex: none; height: 43px; display: flex; align-items: center; background: linear-gradient(90deg, #7f9fc6, #a3bfe1 50px, #a3bfe1 calc(100% - 250px), #7e92b0 calc(100% - 210px)); }
.task { height: 43px; padding: 0 6px; }
.current { margin-left: 10px; padding: 0 13px; border: 1px solid #56657c; border-radius: 3px; background: linear-gradient(90deg, #cbd9ed, #e3ebf5 50%, #b9cde9); }
.tray { margin-left: auto; display: flex; align-items: center; gap: 9px; padding-right: 8px; color: #fff; }
.temp { margin-right: 6px; }
.up { border: 4px solid transparent; border-bottom-color: #fff; border-top: 0; margin-right: 5px; }

/* Floating layers */
.ime { position: absolute; right: 386px; bottom: 50px; display: flex; align-items: center; }
.sogou { position: relative; width: 32px; height: 32px; margin-right: -8px; }
.ime-bar { display: flex; align-items: center; gap: 6px; height: 27px; padding: 0 4px 0 14px; background: #fff; border: 1px solid #b5cfe4; color: #1b69bd; font-size: 17px; }
.ime-bar svg { width: 18px; height: 18px; }
.ime-bar b { width: 19px; text-align: center; line-height: 24px; }
.cursor { position: absolute; left: 106px; top: 136px; width: 14px; height: 22px; }
```
